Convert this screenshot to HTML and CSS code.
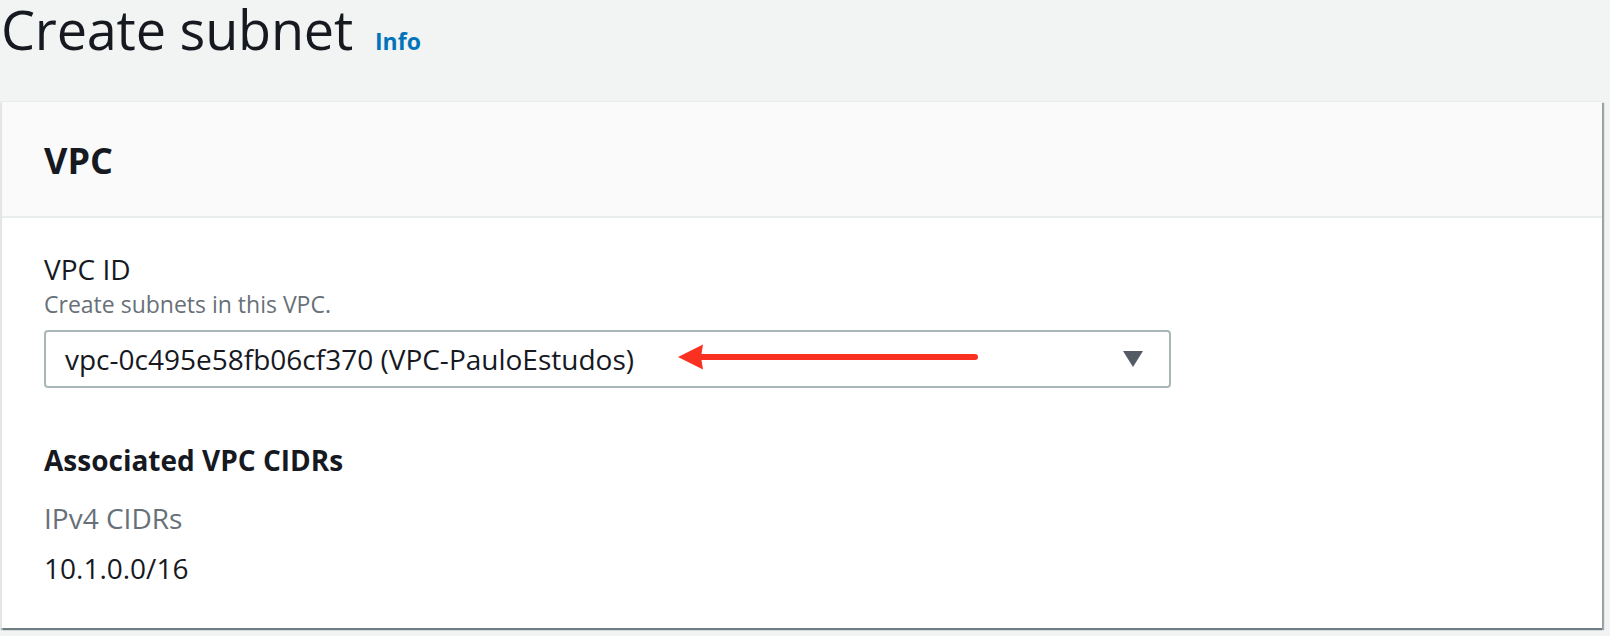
FILE: index.html
```html
<!DOCTYPE html>
<html lang="en">
<head>
<meta charset="utf-8">
<title>Create subnet</title>
<link rel="stylesheet" href="styles.css">
</head>
<body>
  <header class="page-header">
    <h1 class="page-title">Create subnet</h1>
    <a class="info-link" href="#">Info</a>
  </header>
  <section class="card">
    <div class="card-header">
      <h2 class="card-title">VPC</h2>
    </div>
    <div class="card-body">
      <div class="field-label">VPC ID</div>
      <div class="field-desc">Create subnets in this VPC.</div>
      <div class="select">
        <span class="select-value">vpc-0c495e58fb06cf370 (VPC-PauloEstudos)</span>
        <svg class="select-caret" width="20" height="16" viewBox="0 0 20 16"><polygon points="0,0 20,0 10,16" fill="#545b64"/></svg>
        <svg class="annot-arrow" width="300" height="26" viewBox="0 0 300 26">
          <polygon points="0,13 25,0.5 23,13 25,25.5" fill="#fa3120"/>
          <line x1="20" y1="13" x2="297" y2="13" stroke="#fa3120" stroke-width="6" stroke-linecap="round"/>
        </svg>
      </div>
      <h3 class="sub-heading">Associated VPC CIDRs</h3>
      <div class="kv-key">IPv4 CIDRs</div>
      <div class="kv-value">10.1.0.0/16</div>
    </div>
  </section>
</body>
</html>
```
FILE: styles.css
```css
* { box-sizing: border-box; }
html, body { margin: 0; padding: 0; }
body {
  background: #f2f3f3;
  font-family: "Open Sans", "Liberation Sans", sans-serif;
  color: #16191f;
  width: 1610px;
  height: 636px;
  overflow: hidden;
}
.page-header {
  display: flex;
  align-items: baseline;
  padding-left: 1px;
  margin-bottom: 43px;
}
.page-title {
  margin: 0;
  font-size: 54px;
  font-weight: 400;
  line-height: 58px;
  letter-spacing: -0.2px;
}
.info-link {
  margin-left: 22px;
  font-size: 23px;
  font-weight: 700;
  color: #0073bb;
  text-decoration: none;
}
.card {
  margin-left: 1px;
  width: 1601px;
  background: #fff;
  border-top: 1px solid #eaeded;
  border-left: 1px solid #e1e4e4;
  box-shadow: 2px 2px 1px 0 rgba(0, 28, 36, 0.35), 0 2px 1px 0 rgba(0, 28, 36, 0.3);
}
.card-header {
  background: #fafafa;
  padding: 34px 42px 31px;
  border-bottom: 2px solid #eaeded;
}
.card-title {
  margin: 0;
  font-size: 36px;
  font-weight: 700;
  line-height: 49px;
}
.card-body {
  padding: 32px 42px 40px;
}
.field-label {
  font-size: 28px;
  line-height: 38px;
}
.field-desc {
  font-size: 23px;
  line-height: 32px;
  color: #687078;
}
.select {
  position: relative;
  margin-top: 10px;
  width: 1127px;
  height: 58px;
  border: 2px solid #aab7b8;
  border-radius: 4px;
  display: flex;
  align-items: center;
  padding-left: 19px;
  padding-right: 26px;
}
.select-value {
  font-size: 28px;
  line-height: 54px;
}
.select-caret {
  margin-left: auto;
}
.annot-arrow {
  position: absolute;
  left: 632px;
  top: 12px;
}
.sub-heading {
  margin: 52px 0 0;
  font-size: 28px;
  font-weight: 700;
  line-height: 40px;
}
.kv-key {
  margin-top: 18px;
  font-size: 28px;
  line-height: 40px;
  color: #687078;
}
.kv-value {
  margin-top: 10px;
  font-size: 28px;
  line-height: 40px;
}
```
